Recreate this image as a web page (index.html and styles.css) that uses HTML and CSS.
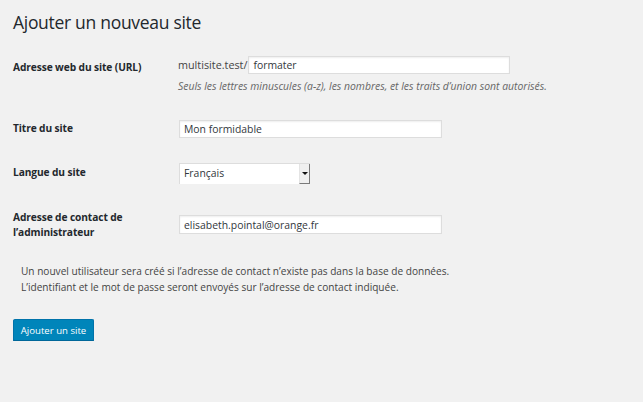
FILE: index.html
```html
<!DOCTYPE html>
<html lang="fr">
<head>
<meta charset="utf-8">
<title>Ajouter un nouveau site</title>
<link rel="stylesheet" href="styles.css">
</head>
<body>
<div class="wrap">
  <h1 class="title">Ajouter un nouveau site</h1>
  <form class="form">
    <div class="row row-url">
      <label class="label">Adresse web du site (URL)</label>
      <div class="field">
        <div class="url-line"><span class="domain">multisite.test/</span><input class="input input-url" type="text" value="formater"></div>
        <p class="hint">Seuls les lettres minuscules (a-z), les nombres, et les traits d’union sont autorisés.</p>
      </div>
    </div>
    <div class="row row-title">
      <label class="label">Titre du site</label>
      <div class="field"><input class="input input-wide" type="text" value="Mon formidable"></div>
    </div>
    <div class="row row-lang">
      <label class="label">Langue du site</label>
      <div class="field">
        <div class="select"><span class="select-value">Français</span><span class="select-btn"><span class="arrow"></span></span></div>
      </div>
    </div>
    <div class="row row-email">
      <label class="label">Adresse de contact de l’administrateur</label>
      <div class="field"><input class="input input-wide input-email" type="text" value="elisabeth.pointal@orange.fr"></div>
    </div>
    <div class="notice">
      <p>Un nouvel utilisateur sera créé si l’adresse de contact n’existe pas dans la base de données.</p>
      <p>L’identifiant et le mot de passe seront envoyés sur l’adresse de contact indiquée.</p>
    </div>
    <div class="actions"><button type="button" class="button">Ajouter un site</button></div>
  </form>
</div>
</body>
</html>
```

FILE: styles.css
```css
html, body {
  margin: 0;
  padding: 0;
  background: #f1f1f1;
}
body {
  font-family: "Open Sans", "Noto Sans", sans-serif;
  font-size: 10.4px;
  color: #444;
}
.wrap {
  padding-left: 13px;
}
.title {
  margin: 0;
  padding-top: 11px;
  font-size: 17.5px;
  letter-spacing: -0.3px;
  line-height: 23px;
  font-weight: 400;
  color: #23282d;
}
.form {
  margin-top: 22px;
}
.row {
  display: grid;
  grid-template-columns: 165px 1fr;
  align-items: center;
}
.label {
  font-size: 10.2px;
  font-weight: 700;
  letter-spacing: -0.1px;
  line-height: 15px;
  color: #23282d;
  padding-right: 20px;
}
.row-url {
  align-items: start;
}
.row-url .label {
  padding-top: 4px;
}
.row-title .label,
.row-lang .label {
  padding-bottom: 2px;
}
.row-title { margin-top: 27px; }
.row-lang { margin-top: 25px; }
.row-email {
  margin-top: 26px;
  align-items: start;
}
.url-line {
  display: flex;
  align-items: center;
  height: 18px;
}
.domain {
  color: #444;
  font-size: 10.8px;
  line-height: 18px;
}
.input {
  box-sizing: border-box;
  height: 18px;
  margin: 0 0 0 1px;
  padding: 0 4px;
  border: 1px solid #ddd;
  box-shadow: inset 0 1px 2px rgba(0,0,0,.07);
  background: #fff;
  color: #32373c;
  font-family: inherit;
  font-size: 10.4px;
  outline: none;
}
.input-url { width: 262px; }
.input-wide { width: 263px; }
.input-email {
  height: 19px;
  margin-top: 5px;
}
.hint {
  margin: 5px 0 0;
  font-style: italic;
  color: #666;
  line-height: 14px;
}
.select {
  box-sizing: border-box;
  display: flex;
  width: 131px;
  height: 21px;
  margin-left: 1px;
  background: #fff;
  border: 1px solid #ddd;
  border-right: none;
  border-bottom: none;
}
.select-value {
  flex: 1;
  padding-left: 4px;
  line-height: 19px;
  color: #32373c;
}
.select-btn {
  position: relative;
  width: 9px;
  background: #f0f0f0;
  border-right: 1px solid #7a7a7a;
  border-bottom: 1px solid #7a7a7a;
  border-left: 1px solid #e4e4e4;
}
.arrow {
  position: absolute;
  left: 2px;
  top: 8px;
  border-left: 3px solid transparent;
  border-right: 3px solid transparent;
  border-top: 3px solid #111;
}
.notice {
  margin: 24px 0 0 8px;
  font-size: 10.1px;
  line-height: 15.5px;
}
.notice p {
  margin: 0;
}
.actions {
  margin-top: 24px;
}
.button {
  box-sizing: border-box;
  height: 22px;
  width: 81px;
  padding: 0;
  background: #0085ba;
  border: 1px solid #0073aa;
  border-bottom-color: #006799;
  border-radius: 2px;
  box-shadow: 0 1px 0 #006799;
  color: #fff;
  font-family: inherit;
  font-size: 9.6px;
  cursor: pointer;
}
```
